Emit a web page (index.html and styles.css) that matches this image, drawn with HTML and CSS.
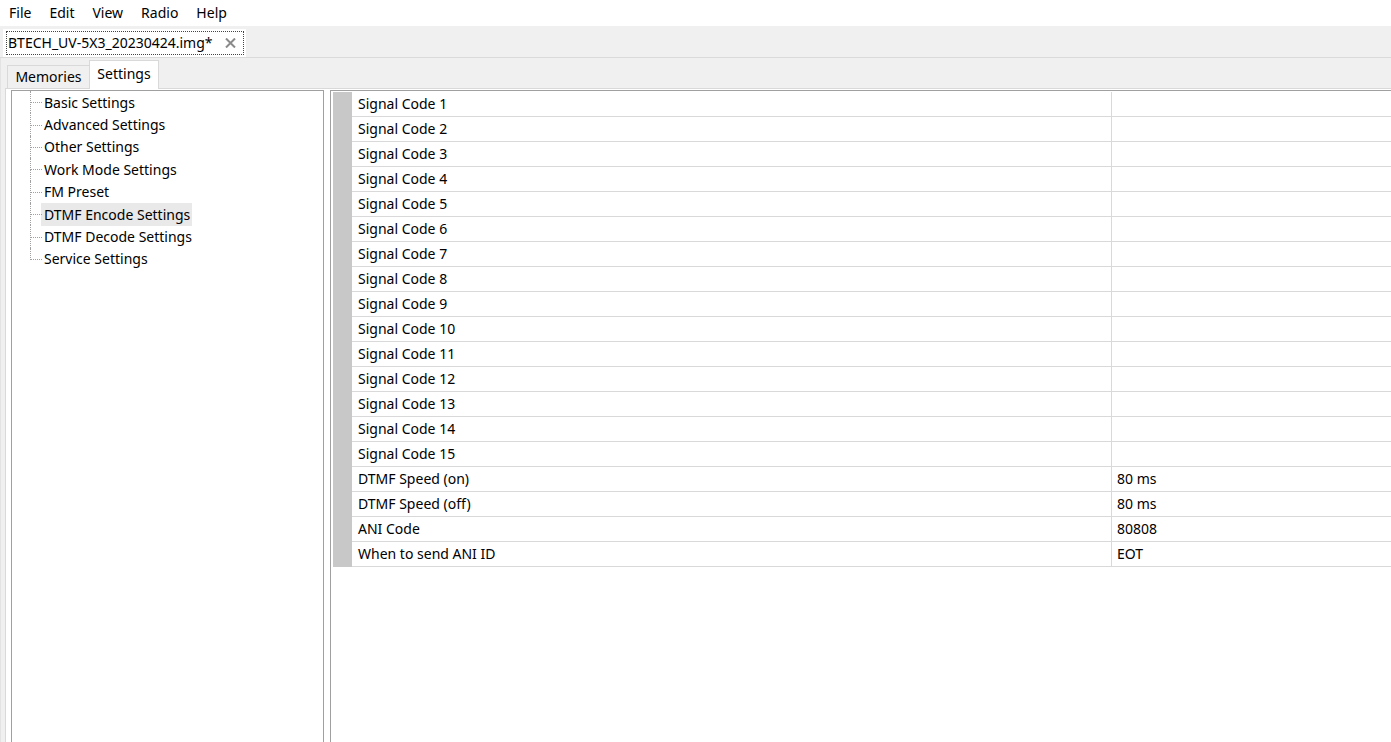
FILE: index.html
```html
<!DOCTYPE html>
<html lang="en">
<head>
    <meta charset="UTF-8">
    <meta name="viewport" content="width=device-width, initial-scale=1.0">
    <title>CHIRP - BTECH_UV-5X3_20230424.img</title>
    <link rel="stylesheet" href="styles.css">
</head>
<body>
    <div class="menubar">
        <span class="menu-item">File</span>
        <span class="menu-item">Edit</span>
        <span class="menu-item">View</span>
        <span class="menu-item">Radio</span>
        <span class="menu-item">Help</span>
    </div>

    <div class="doc-tabs">
        <div class="doc-tab">
            <div class="focus-rect">
                <span class="doc-title">BTECH_UV-5X3_20230424.img*</span>
                <svg class="close-icon" width="11" height="10" viewBox="0 0 11 10">
                    <path d="M1 0.5 L10 9.5 M10 0.5 L1 9.5" stroke="#8a8a8a" stroke-width="2" fill="none"/>
                </svg>
            </div>
        </div>
    </div>

    <div class="doc-page">
        <div class="view-tabs">
            <div class="view-tab">Memories</div>
            <div class="view-tab active">Settings</div>
        </div>

        <div class="view-page">
            <div class="tree">
                <ul>
                    <li><span>Basic Settings</span></li>
                    <li><span>Advanced Settings</span></li>
                    <li><span>Other Settings</span></li>
                    <li><span>Work Mode Settings</span></li>
                    <li><span>FM Preset</span></li>
                    <li class="selected"><span>DTMF Encode Settings</span></li>
                    <li><span>DTMF Decode Settings</span></li>
                    <li><span>Service Settings</span></li>
                </ul>
            </div>

            <div class="grid-panel">
                <div class="grid" id="grid"></div>
            </div>
        </div>
    </div>

    <script>
        const rows = [];
        for (let i = 1; i <= 15; i++) {
            rows.push(['Signal Code ' + i, '']);
        }
        rows.push(['DTMF Speed (on)', '80 ms']);
        rows.push(['DTMF Speed (off)', '80 ms']);
        rows.push(['ANI Code', '80808']);
        rows.push(['When to send ANI ID', 'EOT']);

        const grid = document.getElementById('grid');
        rows.forEach(function (row) {
            const head = document.createElement('div');
            head.className = 'row-head';
            const label = document.createElement('div');
            label.className = 'cell label';
            label.textContent = row[0];
            const value = document.createElement('div');
            value.className = 'cell value';
            value.textContent = row[1];
            grid.append(head, label, value);
        });
    </script>
</body>
</html>
```

FILE: styles.css
```css
html, body {
    height: 100%;
}
body {
    font-family: "Noto Sans", "Open Sans", sans-serif;
    font-size: 14px;
    color: #000;
    margin: 0;
    padding: 0;
    overflow: hidden;
    background: #f0f0f0;
}

/* menu bar */
.menubar {
    height: 26px;
    background: #fff;
    display: flex;
    align-items: center;
    padding-bottom: 2px;
    box-sizing: border-box;
}
.menu-item {
    padding: 0 9px;
}

/* document tabs */
.doc-tabs {
    height: 31px;
    display: flex;
    align-items: flex-end;
    padding-left: 3px;
    border-bottom: 1px solid #dadada;
}
.doc-tab {
    height: 28px;
    width: 243px;
    box-sizing: border-box;
    background: #fff;
    padding: 2px 2px 2px 3px;
}
.focus-rect {
    height: 100%;
    box-sizing: border-box;
    border: 1px dotted #444;
    display: flex;
    align-items: center;
    justify-content: space-between;
    padding: 0 7px 1px 1px;
}
.close-icon {
    display: block;
}

/* settings / memories tabs */
.doc-page {
    height: calc(100% - 58px);
    display: flex;
    flex-direction: column;
    border-left: 1px solid #e3e3e3;
    padding-left: 4px;
}
.view-tabs {
    height: 30px;
    display: flex;
    align-items: flex-end;
    padding-left: 2px;
    position: relative;
    z-index: 1;
}
.view-tab {
    box-sizing: border-box;
    border: 1px solid #d9d9d9;
    border-bottom: none;
    display: flex;
    align-items: center;
    justify-content: center;
}
.view-tab:first-child {
    height: 23px;
    width: 82px;
    background: #f0f0f0;
    border-right: none;
    padding-bottom: 1px;
}
.view-tab.active {
    height: 29px;
    width: 70px;
    background: #fff;
    margin-bottom: -1px;
    padding-bottom: 3px;
}

.view-page {
    flex: 1;
    background: #fff;
    border-top: 1px solid #d9d9d9;
    border-left: 1px solid #d9d9d9;
    padding: 1px 0 0 5px;
    display: flex;
    gap: 6px;
    min-height: 0;
}

/* tree */
.tree {
    width: 313px;
    flex-shrink: 0;
    box-sizing: border-box;
    border: 1px solid #a0a0a0;
    border-bottom: none;
}
.tree ul {
    list-style: none;
    margin: 0;
    padding: 0;
}
.tree li {
    position: relative;
    height: 22.4px;
    display: flex;
    align-items: center;
    padding-left: 32px;
}
.tree li::before {
    content: "";
    position: absolute;
    left: 18px;
    top: 0;
    height: 50%;
    width: 11px;
    border-left: 1px dotted #a0a0a0;
    border-bottom: 1px dotted #a0a0a0;
}
.tree li:not(:last-child)::after {
    content: "";
    position: absolute;
    left: 18px;
    top: 50%;
    bottom: 0;
    border-left: 1px dotted #a0a0a0;
}
.tree li.selected span {
    background: #e9e9e9;
    margin-left: -3px;
    padding: 2px 2px 2px 3px;
}

/* settings grid */
.grid-panel {
    flex: 1;
    border-top: 1px solid #a0a0a0;
    border-left: 1px solid #a0a0a0;
    padding: 1px 0 0 2px;
}
.grid {
    display: grid;
    grid-template-columns: 19px 760px 1fr;
}
.row-head {
    background: #c8c8c8;
    height: 25px;
}
.cell {
    height: 25px;
    box-sizing: border-box;
    border-bottom: 1px solid #d9d9d9;
    display: flex;
    align-items: center;
    padding-bottom: 2px;
    white-space: nowrap;
}
.cell.label {
    border-right: 1px solid #d9d9d9;
    padding-left: 6px;
}
.cell.value {
    padding-left: 5px;
}
```
